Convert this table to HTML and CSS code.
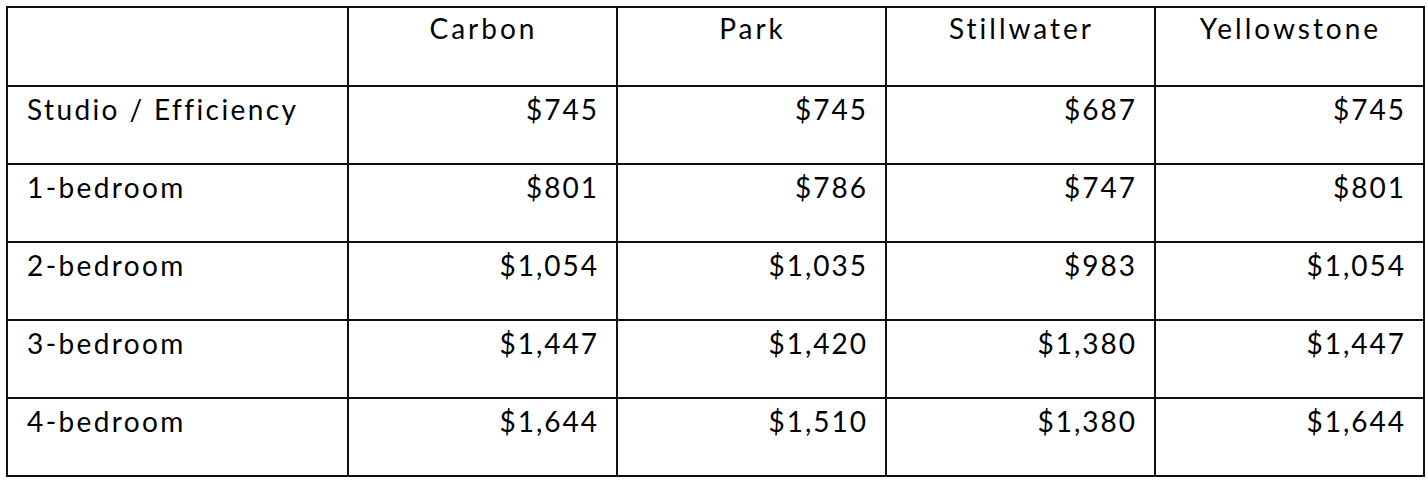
FILE: index.html
```html
<!DOCTYPE html>
<html>
<head>
<meta charset="utf-8">
<link rel="stylesheet" href="styles.css">
</head>
<body>
<table class="rent">
  <colgroup>
    <col class="c-label">
    <col class="c-val">
    <col class="c-val">
    <col class="c-val">
    <col class="c-val">
  </colgroup>
  <tr class="head">
    <th></th><th>Carbon</th><th>Park</th><th>Stillwater</th><th>Yellowstone</th>
  </tr>
  <tr><td class="label">Studio / Efficiency</td><td>$745</td><td>$745</td><td>$687</td><td>$745</td></tr>
  <tr><td class="label">1-bedroom</td><td>$801</td><td>$786</td><td>$747</td><td>$801</td></tr>
  <tr><td class="label">2-bedroom</td><td>$1,054</td><td>$1,035</td><td>$983</td><td>$1,054</td></tr>
  <tr><td class="label">3-bedroom</td><td>$1,447</td><td>$1,420</td><td>$1,380</td><td>$1,447</td></tr>
  <tr><td class="label">4-bedroom</td><td>$1,644</td><td>$1,510</td><td>$1,380</td><td>$1,644</td></tr>
</table>
</body>
</html>
```
FILE: styles.css
```css
html, body {
  margin: 0;
  background: #fff;
}
body {
  padding: 6px;
  font-family: Lato, "Open Sans", sans-serif;
  color: #000;
}
.rent {
  border-collapse: collapse;
  table-layout: fixed;
  width: 1416px;
}
.c-label { width: 341px; }
.c-val { width: 269px; }
.rent th, .rent td {
  border: 2px solid #111;
  font-size: 28px;
  font-weight: normal;
  letter-spacing: 3px;
  vertical-align: top;
  padding: 0 17px 0 19px;
  line-height: 40px;
  height: 78px;
  box-sizing: border-box;
}
.rent th {
  text-align: center;
  padding-top: 0;
  height: 79px;
}
.rent td {
  text-align: right;
  letter-spacing: 2px;
  padding-top: 2px;
}
.rent td.label {
  text-align: left;
  letter-spacing: 2.4px;
}
```
